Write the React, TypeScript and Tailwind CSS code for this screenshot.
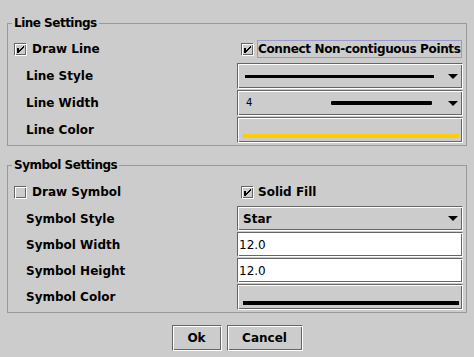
import React from 'react';

// Metal-style "flush 3D" border: dark outer top/left, white inner top/left
const flush =
    'border border-t-[#666666] border-l-[#666666] border-r-white border-b-white shadow-[inset_1px_1px_0_#ffffff,inset_-1px_-1px_0_#666666]';

const checkPixels = [
    [9, 3], [8, 4], [7, 5], [6, 6], [5, 7],
    [9, 4], [8, 5], [7, 6], [6, 7], [5, 8],
];

function CheckBox({ checked }: { checked?: boolean }) {
    return (
        <svg width="13" height="13" viewBox="0 0 13 13" shapeRendering="crispEdges" className="shrink-0">
            <rect x="0.5" y="0.5" width="11" height="11" fill="none" stroke="#666666" />
            <rect x="1.5" y="1.5" width="11" height="11" fill="none" stroke="#ffffff" />
            {checked && (
                <g fill="#000000">
                    <rect x="3" y="5" width="2" height="5" />
                    {checkPixels.map(([x, y]) => (
                        <rect key={`${x}-${y}`} x={x} y={y} width="1" height="1" />
                    ))}
                </g>
            )}
        </svg>
    );
}

function Arrow() {
    return (
        <svg width="10" height="5" viewBox="0 0 10 5" className="shrink-0">
            <path d="M0 0H10L5 5Z" fill="#000000" />
        </svg>
    );
}

function Label({ children }: { children: React.ReactNode }) {
    return <div className="flex items-center pl-[18px] text-[12px] font-bold">{children}</div>;
}

function Group({ title, children }: { title: string; children: React.ReactNode }) {
    return (
        <fieldset className="min-w-0 border border-[#999999] pr-[3px] pb-[2px]">
            <legend className="ml-[4px] px-[2px] text-[12px] leading-[16px] font-bold tracking-[-0.5px]">{title}</legend>
            {children}
        </fieldset>
    );
}

export default function App() {
    return (
        <div className="h-[357px] w-[474px] overflow-hidden bg-[#cccccc] px-[7px] pt-[15px] font-['DejaVu_Sans',sans-serif] text-black">
            {/* Line Settings */}
            <Group title="Line Settings">
                <div className="mt-[9px] grid h-[18px] grid-cols-[229px_226px]">
                    <div className="flex items-center gap-[5px] pl-[6px]">
                        <CheckBox checked />
                        <span className="text-[12px] leading-[16px] font-bold">Draw Line</span>
                    </div>
                    <div className="flex items-center gap-[3px] pl-[4px]">
                        <CheckBox checked />
                        <span className="w-[205px] border border-[#9999cc] text-[12px] leading-[16px] font-bold tracking-[-0.35px] whitespace-nowrap">
                            Connect Non-contiguous Points
                        </span>
                    </div>
                </div>

                <div className="mt-[5px] grid grid-cols-[229px_226px] grid-rows-[26px_26px_26px] gap-y-[1px]">
                    <Label>Line Style</Label>
                    <div className={`${flush} flex items-center pr-[4px] pl-[7px]`}>
                        <div className="mr-[14px] h-[3px] flex-1 bg-black" />
                        <Arrow />
                    </div>

                    <Label>Line Width</Label>
                    <div className={`${flush} flex items-center pr-[4px] pl-[8px]`}>
                        <span className="text-[10px] leading-none">4</span>
                        <div className="mr-[16px] ml-auto h-[4px] w-[101px] rounded-[1px] bg-black" />
                        <Arrow />
                    </div>

                    <Label>Line Color</Label>
                    <div className={`${flush} flex items-end pr-[3px] pb-[4px] pl-[5px]`}>
                        <div className="h-[4px] flex-1 bg-[#ffcc00]" />
                    </div>
                </div>
            </Group>

            <div className="h-[11px]" />

            {/* Symbol Settings */}
            <Group title="Symbol Settings">
                <div className="mt-[10px] grid h-[18px] grid-cols-[229px_226px]">
                    <div className="flex items-center gap-[5px] pl-[6px]">
                        <CheckBox />
                        <span className="text-[12px] leading-[16px] font-bold">Draw Symbol</span>
                    </div>
                    <div className="flex items-center gap-[4px] pl-[4px]">
                        <CheckBox checked />
                        <span className="text-[12px] leading-[16px] font-bold">Solid Fill</span>
                    </div>
                </div>

                <div className="mt-[5px] grid grid-cols-[229px_226px] grid-rows-[25px_25px_25px_26px] gap-y-[1px]">
                    <Label>Symbol Style</Label>
                    <div className={`${flush} flex items-center pr-[4px] pl-[5px]`}>
                        <span className="flex-1 text-[12px] font-bold">Star</span>
                        <Arrow />
                    </div>

                    <Label>Symbol Width</Label>
                    <div className={`${flush} flex items-center bg-white pl-[1px] text-[12px]`}>12.0</div>

                    <Label>Symbol Height</Label>
                    <div className={`${flush} flex items-center bg-white pl-[1px] text-[12px]`}>12.0</div>

                    <Label>Symbol Color</Label>
                    <div className={`${flush} flex items-end pr-[3px] pb-[4px] pl-[5px]`}>
                        <div className="h-[4px] flex-1 bg-black" />
                    </div>
                </div>
            </Group>

            {/* Buttons */}
            <div className="mt-[12px] flex justify-center gap-[5px]">
                <button className={`${flush} h-[26px] w-[50px] text-[12px] font-bold`}>Ok</button>
                <button className={`${flush} h-[26px] w-[76px] text-[12px] font-bold`}>Cancel</button>
            </div>
        </div>
    );
}
